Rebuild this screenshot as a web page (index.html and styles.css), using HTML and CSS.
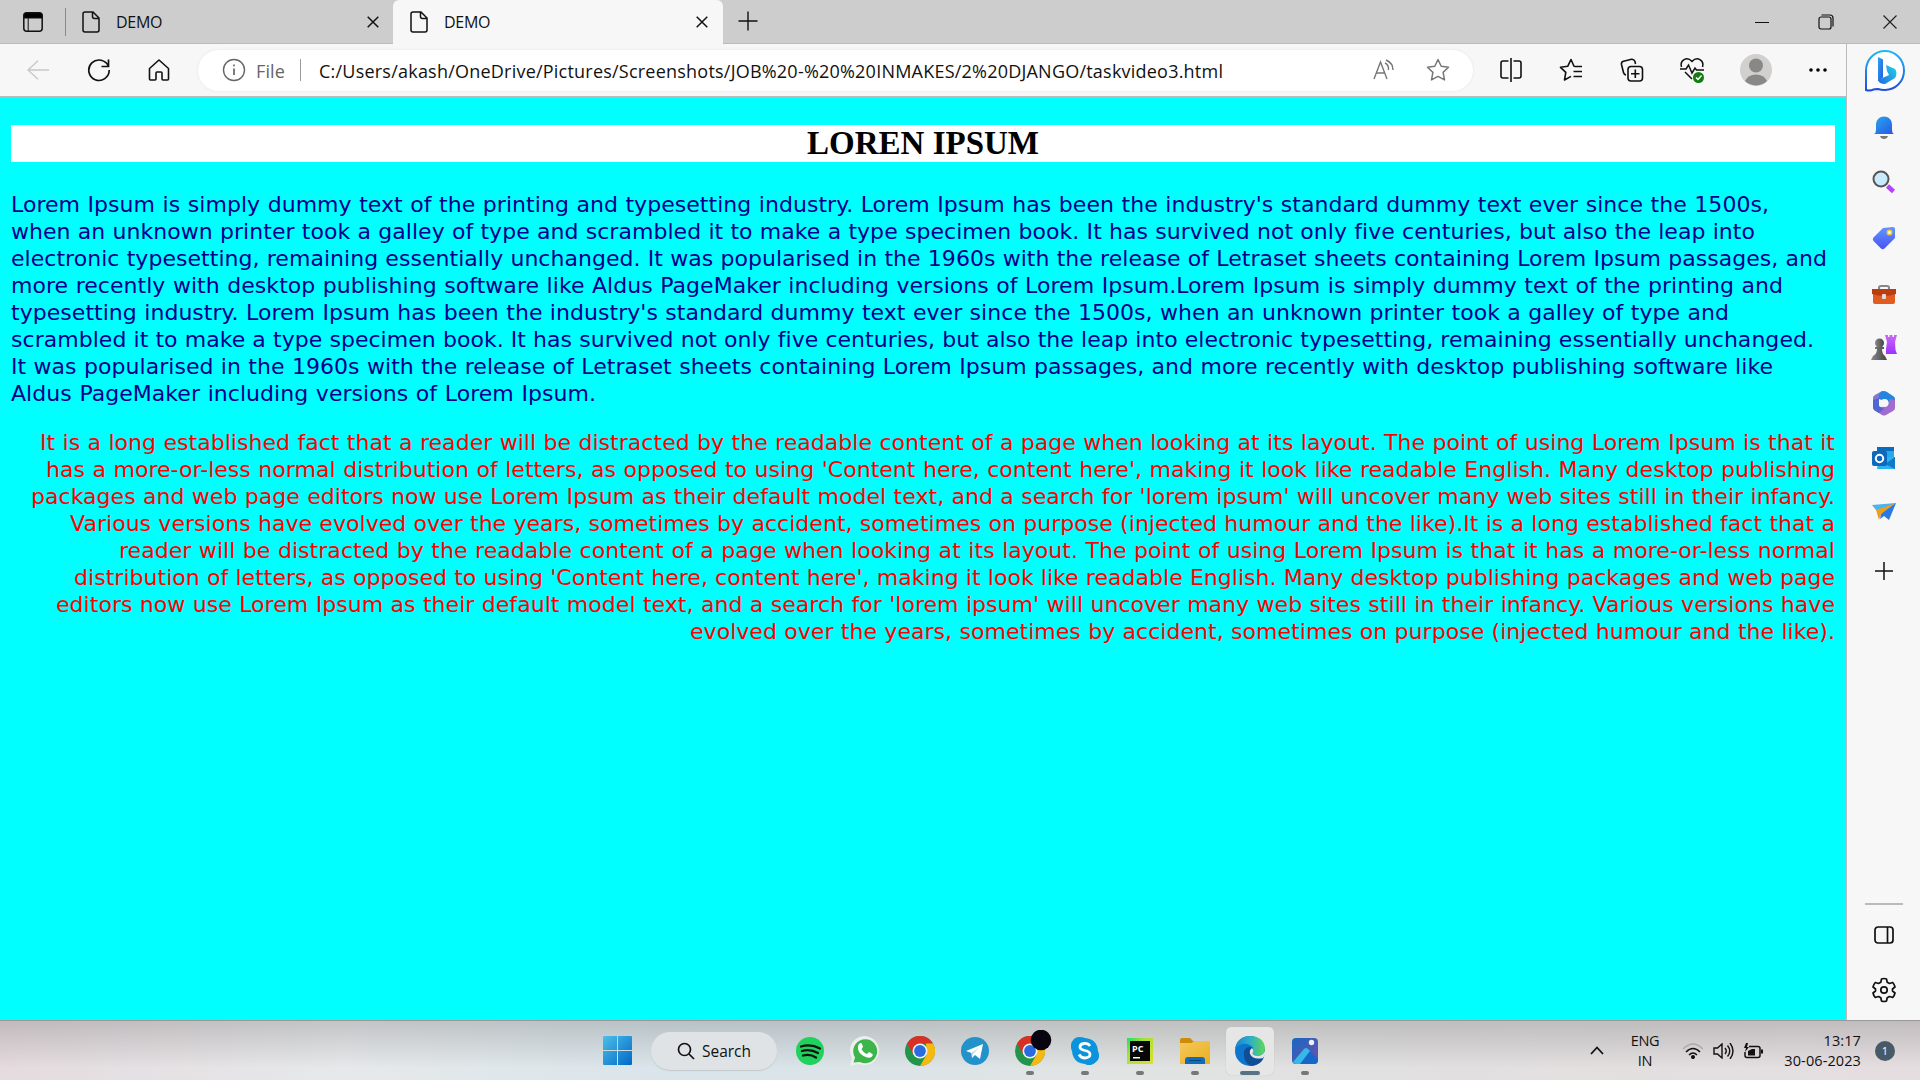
FILE: index.html
```html
<!DOCTYPE html>
<html lang="en">
<head>
<meta charset="utf-8">
<title>DEMO</title>
<link rel="stylesheet" href="styles.css">
</head>
<body>
<svg class="defs" width="0" height="0">
  <defs>
    <linearGradient id="blue" x1="0" y1="0" x2="1" y2="1"><stop offset="0" stop-color="#2aa8ea"/><stop offset="1" stop-color="#2756e8"/></linearGradient>
    <linearGradient id="bingRing" x1="0" y1="0" x2="0" y2="1"><stop offset="0" stop-color="#22b8f5"/><stop offset="1" stop-color="#2050d8"/></linearGradient>
    <linearGradient id="bingTail" x1="1" y1="0" x2="0" y2="1"><stop offset="0" stop-color="#1cd8e8"/><stop offset="1" stop-color="#2468e0"/></linearGradient>
    <linearGradient id="tag" x1="0" y1="0" x2="0" y2="1"><stop offset="0" stop-color="#6096ff"/><stop offset="1" stop-color="#4a52f4"/></linearGradient>
    <linearGradient id="rook" x1="0" y1="0" x2="0" y2="1"><stop offset="0" stop-color="#c86cf4"/><stop offset="1" stop-color="#a030ff"/></linearGradient>
    <linearGradient id="pawn"><stop offset="0" stop-color="#8a8a8a"/><stop offset="1" stop-color="#444"/></linearGradient>
    <linearGradient id="win" x1="0" y1="0" x2="1" y2="1"><stop offset="0" stop-color="#4cc0e8"/><stop offset="1" stop-color="#0067c8"/></linearGradient>
    <linearGradient id="edgeTop"><stop offset="0" stop-color="#1684d0"/><stop offset=".5" stop-color="#2cb0c8"/><stop offset="1" stop-color="#62d850"/></linearGradient>
    <linearGradient id="folder" x1="0" y1="0" x2="1" y2="1"><stop offset="0" stop-color="#f4c85c"/><stop offset="1" stop-color="#eab020"/></linearGradient>
    <linearGradient id="photo" x1="0" y1="0" x2="1" y2="1"><stop offset="0" stop-color="#1468c4"/><stop offset="1" stop-color="#7450a8"/></linearGradient>
    <linearGradient id="pc" x1="0" y1="0" x2="1" y2="1"><stop offset="0" stop-color="#18e068"/><stop offset=".35" stop-color="#a8e038"/><stop offset="1" stop-color="#dce030"/></linearGradient>
    <symbol id="page" viewBox="0 0 18 22"><path d="M3 1h8l6 6v12a2 2 0 0 1-2 2H3a2 2 0 0 1-2-2V3a2 2 0 0 1 2-2zM10.500 1v4.500a2 2 0 0 0 2 2H17" fill="none" stroke="#111" stroke-width="1.500"/></symbol>
    <symbol id="x" viewBox="0 0 12 12"><path d="M.7.7l10.600 10.600M11.300.7L.7 11.300" stroke="#111" stroke-width="1.500"/></symbol>
    <symbol id="chrome" viewBox="0 0 30 30">
      <circle cx="15" cy="15" r="15" fill="#21964a"/>
      <path d="M2 7.500A15 15 0 0 1 28 7.500H15L8.500 18.700z" fill="#d93025"/>
      <path d="M28 7.500A15 15 0 0 1 15 30l6.500-11.300L21 7.500z" fill="#f5b912"/>
      <circle cx="15" cy="15" r="7.500" fill="#f4f4f4"/><circle cx="15" cy="15" r="5.900" fill="#2a6be0"/>
    </symbol>
  </defs>
</svg>
<header class="tabs">
  <div class="workspace"><svg width="20" height="20" viewBox="0 0 20 20"><rect x=".8" y=".8" width="18.400" height="18.400" rx="3" fill="none" stroke="#111" stroke-width="1.500"/><path d="M1 6V3a2 2 0 0 1 2-2h14a2 2 0 0 1 2 2v3zM5.200 6v13" stroke="#111"/></svg></div>
  <div class="tab"><svg width="18" height="22"><use href="#page"/></svg><span>DEMO</span><svg class="close" width="12" height="12"><use href="#x"/></svg></div>
  <div class="tab active"><svg width="18" height="22"><use href="#page"/></svg><span>DEMO</span><svg class="close" width="12" height="12"><use href="#x"/></svg></div>
  <svg class="plus" width="20" height="20" viewBox="0 0 20 20"><path d="M10 .5v19M.5 10h19" stroke="#111" stroke-width="1.400"/></svg>
  <div class="controls">
    <svg width="14" height="14"><path d="M0 7.500h14" stroke="#111"/></svg>
    <svg width="16" height="16" fill="none" stroke="#111" stroke-width="1.200"><rect x="1" y="3" width="12" height="12" rx="2"/><path d="M3.500 1h8.500a3 3 0 0 1 3 3v8.500"/></svg>
    <svg width="14" height="14"><path d="M.5.5l13 13M13.500.5l-13 13" stroke="#222" stroke-width="1.200"/></svg>
  </div>
</header>
<div class="browser">
  <main class="left">
    <nav class="toolbar">
      <svg class="back" width="22" height="20" fill="none" stroke="#c8c8c8" stroke-width="1.400"><path d="M11 .8L1 10l10 9.200M1 10h21"/></svg>
      <svg class="reload" width="24" height="24" fill="none" stroke="#111" stroke-width="1.700"><path d="M21.500 8.500A10.200 10.200 0 1 0 22.200 12M21.500 1.500v7h-7"/></svg>
      <svg class="home" width="22" height="22" fill="none" stroke="#111" stroke-width="1.600" stroke-linejoin="round"><path d="M1.500 9.500L11 1l9.500 8.500V20a1 1 0 0 1-1 1H15a1 1 0 0 1-1-1v-6a1 1 0 0 0-1-1H9a1 1 0 0 0-1 1v6a1 1 0 0 1-1 1H2.500a1 1 0 0 1-1-1z"/></svg>
      <div class="address">
        <svg class="info" width="24" height="24" fill="none" stroke="#666" stroke-width="1.400"><circle cx="12" cy="12" r="10.500"/><path d="M12 10.500V17M12 6.500v1.800" stroke-width="1.700"/></svg>
        <span class="scheme">File</span><i></i><span class="url">C:/Users/akash/OneDrive/Pictures/Screenshots/JOB%20-%20%20INMAKES/2%20DJANGO/taskvideo3.html</span>
        <svg class="read" width="22" height="22" fill="none" stroke="#777" stroke-width="1.400"><path d="M1 20L7.500 3 14 20M3.500 14h8M12 4q4 2 3.500 7M13 1q7 3 7 10"/></svg>
        <svg class="star" width="24" height="24" viewBox="0 0 24 24" fill="none" stroke="#777" stroke-width="1.500" stroke-linejoin="round"><path d="M12 1.500l3.200 6.800 7.300 1-5.400 5.100 1.400 7.500-6.500-3.600-6.500 3.600 1.400-7.500-5.400-5.100 7.300-1z"/></svg>
      </div>
      <div class="tools">
        <svg width="24" height="24" fill="none" stroke="#111" stroke-width="1.600"><path d="M9.500 3H4a2 2 0 0 0-2 2v13a2 2 0 0 0 2 2h5.500M14.500 3H20a2 2 0 0 1 2 2v13a2 2 0 0 1-2 2h-5.500M12 0v24"/></svg>
        <svg width="24" height="24" fill="none" stroke="#111" stroke-width="1.600" stroke-linejoin="round"><path d="M16 8.500l-1-.2L12 1.500 8.700 8.300l-7.200 1 5.300 5.100L5.500 22l6.500-3.600M16 8.500h7M14.500 13.500H23M14.500 18.500H23"/></svg>
        <svg width="24" height="24" fill="none" stroke="#111" stroke-width="1.600"><path d="M6 17q-2-.5-2.500-2.500l-2-8Q1 4 3.500 3.300l8-2Q14 1 15 3.500l.5 2.500"/><rect x="8" y="8.500" width="14.500" height="14.500" rx="3"/><path d="M15.300 11.500v8.500M11 15.800h8.500"/></svg>
        <svg width="24" height="26" fill="none" stroke="#111" stroke-width="1.500"><path d="M1.500 10C-.5 3 7-1 12 4.500 17-1 24.500 3 22.500 10M0 12h6l2.500-4 3.500 8 3-5 1.500 2H24M5 15l7 7"/><circle cx="18.500" cy="20.500" r="5.500" fill="#107c10" stroke="none"/><path d="M16 20.500l2 2 3.500-4" stroke="#fff"/></svg>
        <svg width="32" height="32" viewBox="0 2 32 32"><circle cx="16" cy="18" r="16" fill="#d2d0ce"/><circle cx="16" cy="13.500" r="7" fill="#8a8886"/><path d="M5 29q3-6.500 11-6.500T27 29a16 16 0 0 1-22 0" fill="#8a8886"/></svg>
        <svg width="20" height="6"><circle cx="3" cy="3" r="1.800"/><circle cx="10" cy="3" r="1.800"/><circle cx="17" cy="3" r="1.800"/></svg>
      </div>
    </nav>
    <article class="document">
      <h1>LOREN IPSUM</h1>
      <p class="navy"><span>Lorem Ipsum is simply dummy text of the printing and typesetting industry. Lorem Ipsum has been the industry's standard dummy text ever since the 1500s,</span><span>when an unknown printer took a galley of type and scrambled it to make a type specimen book. It has survived not only five centuries, but also the leap into</span><span>electronic typesetting, remaining essentially unchanged. It was popularised in the 1960s with the release of Letraset sheets containing Lorem Ipsum passages, and</span><span>more recently with desktop publishing software like Aldus PageMaker including versions of Lorem Ipsum.Lorem Ipsum is simply dummy text of the printing and</span><span>typesetting industry. Lorem Ipsum has been the industry's standard dummy text ever since the 1500s, when an unknown printer took a galley of type and</span><span>scrambled it to make a type specimen book. It has survived not only five centuries, but also the leap into electronic typesetting, remaining essentially unchanged.</span><span>It was popularised in the 1960s with the release of Letraset sheets containing Lorem Ipsum passages, and more recently with desktop publishing software like</span><span>Aldus PageMaker including versions of Lorem Ipsum.</span></p>
      <p class="red"><span>It is a long established fact that a reader will be distracted by the readable content of a page when looking at its layout. The point of using Lorem Ipsum is that it</span><span>has a more-or-less normal distribution of letters, as opposed to using 'Content here, content here', making it look like readable English. Many desktop publishing</span><span>packages and web page editors now use Lorem Ipsum as their default model text, and a search for 'lorem ipsum' will uncover many web sites still in their infancy.</span><span>Various versions have evolved over the years, sometimes by accident, sometimes on purpose (injected humour and the like).It is a long established fact that a</span><span>reader will be distracted by the readable content of a page when looking at its layout. The point of using Lorem Ipsum is that it has a more-or-less normal</span><span>distribution of letters, as opposed to using 'Content here, content here', making it look like readable English. Many desktop publishing packages and web page</span><span>editors now use Lorem Ipsum as their default model text, and a search for 'lorem ipsum' will uncover many web sites still in their infancy. Various versions have</span><span>evolved over the years, sometimes by accident, sometimes on purpose (injected humour and the like).</span></p>
    </article>
  </main>
  <aside class="sidebar">
    <svg class="bing" width="42" height="48" viewBox="0 0 42 48"><path d="M21 2C31 2 40 10 40 21.500S31 41 21 41q-4 0-7-1-4 0-6 1-3 1-6 0L2 21.500C2 10 11 2 21 2z" fill="#fff" stroke="url(#bingRing)" stroke-width="2"/><path d="M14 8l5 2.500v18L14 32z" fill="url(#blue)"/><path d="M22 16l9 4q3 4 0 9l-10 6q-6 0-7-4l11-5-2-4z" fill="url(#bingTail)"/></svg>
    <svg width="24" height="24" viewBox="0 0 24 24"><path d="M2 18h20q-2-1-2-4V8Q19 .5 12 .5T4 8v6q0 3-2 4z" fill="url(#blue)"/><path d="M8 20h8q-1 3-4 3t-4-3z" fill="#777"/></svg>
    <svg class="find" width="24" height="24" viewBox="0 0 24 24"><path d="M15.500 16l6 5.500" stroke="#b840ff" stroke-width="4.500"/><circle cx="9" cy="9" r="7.500" fill="#c8eafc" stroke="#555" stroke-width="2"/></svg>
    <svg class="shop" width="24" height="24" viewBox="0 0 24 24"><path d="M11 2L21 1q2 0 2 2v9L12.500 22.500q-2 1.500-3.500 0L1.500 15q-1.500-2 0-3.500z" fill="url(#tag)"/><circle cx="17.500" cy="6.500" r="2.200" fill="#fff" stroke="#f4c820" stroke-width="1.600"/></svg>
    <svg class="kit" width="26" height="24" viewBox="0 0 26 24"><path d="M8 8V5.500Q8 4 10 4h6q2 0 2 1.500V8" fill="none" stroke="#888" stroke-width="2"/><path d="M2 11h22v9q0 2-2 2H4q-2 0-2-2z" fill="#e05c20"/><path d="M1 7h24v5q-12 4-24 0z" fill="#bc3c10"/><rect x="11" y="12" width="4" height="5" rx="1" fill="#ddd"/></svg>
    <svg class="games" width="26" height="26" viewBox="0 0 26 26"><path d="M14 0h3v2h1.500V0h3v2H23V0h3l-2 7 .5 8 1.500 4H15v-5l1-7z" fill="url(#rook)"/><circle cx="8.500" cy="8" r="4.500" fill="url(#pawn)"/><path d="M4 12h9v2h-2q0 5 3 7l2 4H0l2-4q4-2 4-7H4z" fill="url(#pawn)"/></svg>
    <svg class="office" width="24" height="26" viewBox="0 0 24 26"><path d="M12 1l-5 3v11l-6 4V8q0-2 2-3l7-4z" fill="#8076d4"/><path d="M9 2q3-2 6 0l6 4q2 1 2 3v6L7 9V4z" fill="#2386dc"/><path d="M23 10v8q0 2-2 3l-7 4q-2 1-4 0l-8-5q3 0 6-2l9-5V9z" fill="#a16ccf"/><path d="M1 10l6-2v8l5 3-5 4-5-3q-1-1-1-3z" fill="#5266d2"/><circle cx="12.500" cy="13" r="4" fill="#f7f7f7"/></svg>
    <svg class="mail" width="24" height="24" viewBox="0 0 24 24"><path d="M5 1h17v11H5z" fill="#28a8ea"/><path d="M5 1h17v4H5z" fill="#0a6cbd"/><path d="M7 11h16v12H5z" fill="#28b4f0"/><path d="M13 18l10-7v12z" fill="#1478c8"/><rect y="5" width="15" height="15" rx="2" fill="#0f68bc"/><circle cx="7.500" cy="12.500" r="3.700" fill="none" stroke="#fff" stroke-width="2"/></svg>
    <svg class="drop" width="24" height="20" viewBox="0 0 24 20"><path d="M0 3l24-2-8 12-12-5z" fill="#48b4f0"/><path d="M4 8L24 1 9 12l-2 6z" fill="#f0a018"/><path d="M9 12L24 1l-7 17-5-4-4 3z" fill="#2878e8"/></svg>
    <svg class="add" width="18" height="18"><path d="M9 0v18M0 9h18" stroke="#111" stroke-width="1.500"/></svg>
    <div class="spacer"></div><hr>
    <svg class="panel" width="20" height="18" fill="none" stroke="#111" stroke-width="1.700"><rect x="1" y="1" width="18" height="16" rx="3"/><path d="M13.500 1v16"/></svg>
    <svg class="gear" width="24" height="26" viewBox="0 0 24 26" fill="none" stroke="#111" stroke-width="1.700" stroke-linejoin="round"><path d="M9.500 2q2.500-1 5 0l.7 3.200 2.300 1.300 3.200-1q1.800 2 2.300 4.500L20.500 12v2l2.500 2q-.5 2.500-2.300 4.500l-3.200-1-2.300 1.300-.7 3.200q-2.500 1-5 0l-.7-3.200-2.300-1.300-3.200 1Q1.500 18.500 1 16l2.500-2v-2L1 10q.5-2.500 2.300-4.500l3.200 1 2.300-1.300z"/><circle cx="12" cy="13" r="3.200"/></svg>
  </aside>
</div>
<footer class="taskbar">
  <div class="apps">
    <div class="app"><svg width="30" height="30" fill="url(#win)"><path d="M0 1a1 1 0 0 1 1-1h13v14H0zM15 0h13a1 1 0 0 1 1 1v13H15zM0 15h14v14H1a1 1 0 0 1-1-1zM15 15h14v13a1 1 0 0 1-1 1H15z"/></svg></div>
    <div class="search"><svg width="18" height="18" fill="none" stroke="#111" stroke-width="1.700"><circle cx="7.500" cy="7.500" r="6"/><path d="M12 12l5 5"/></svg><span>Search</span></div>
    <div class="app"><svg width="28" height="28"><circle cx="14" cy="14" r="14" fill="#1ed25c"/><path d="M5 9.500q10-3 19 2M6 14q8-2.500 16 2M7 18.500q7-2 13 2" fill="none" stroke="#111" stroke-width="2.300" stroke-linecap="round"/></svg></div>
    <div class="app"><svg width="30" height="30"><path d="M0 30l2-8A14.500 14.500 0 1 1 9 28z" fill="#eee"/><path d="M3.500 26.500l1.500-5A12 12 0 1 1 10 26z" fill="#3cb64a"/><path d="M9 8q2-2 3 0l1 3-1.500 2q2 4 5.500 5l2-2 3.500 2q1 1-1 3-3 2-8-1Q7 16 8 10z" fill="#fff"/></svg></div>
    <div class="app"><svg width="30" height="30"><use href="#chrome"/></svg></div>
    <div class="app"><svg width="28" height="28"><circle cx="14" cy="14" r="14" fill="#2391ca"/><path d="M5 14L22 7l-3 15-5-4-3 3-.5-5L5 14z" fill="#fff"/><path d="M10.500 16l8-6-6.500 7-1 4z" fill="#b8d8ea"/></svg></div>
    <div class="app run"><svg class="profile" width="37" height="36" viewBox="0 0 37 36"><use href="#chrome" y="6" width="30" height="30"/><circle cx="26" cy="10" r="10.300" fill="#080510"/></svg></div>
    <div class="app run"><svg width="28" height="28"><path d="M8 0q4 0 6 1 12 1 13 13 3 7-2 11-5 5-11 2Q2 26 1 14-2 7 3 2q2-2 5-2z" fill="#0b94dc"/><path d="M19 9q-2-3-6-2.500-4 .5-4 3.500 0 2.500 5 3.500t5 4-5 3.500q-4 0-6-3.500" fill="none" stroke="#fff" stroke-width="2.800"/></svg></div>
    <div class="app run"><svg width="26" height="26"><path d="M0 0h26v26H0z" fill="url(#pc)"/><path d="M3 3h20v20H3z" fill="#050805"/><path d="M6 19h7v1.500H6z" fill="#fff"/><text class="pc-label" x="5" y="13.500">PC</text></svg></div>
    <div class="app run"><svg width="30" height="26"><path d="M0 2q0-2 2-2h8l3 3h15v6H0z" fill="#cc8c08"/><path d="M0 5h12l2-2h14q2 0 2 2v21H0z" fill="url(#folder)"/><path d="M5 26v-4q0-3 3-3h14q3 0 3 3v4z" fill="#116cc0"/><path d="M9 22.500h12" stroke="#064878"/></svg></div>
    <div class="app run focus"><svg width="30" height="30" viewBox="0 0 30 30"><circle cx="15" cy="15" r="15" fill="#0c76ce"/><path d="M0 13Q2 0 16 0q13 1 14 12 0 8-8 8-6 0-4-4 2-6-6-8Q5 7 0 13z" fill="url(#edgeTop)"/><path d="M9 15q3-6 9-3-4 3-2 7 4 6 13 2-3 8-12 9-9-2-8-15z" fill="#114d94"/><path d="M17 12q-3 2-2 6 3 6 13 4l2-3v-4q-2 5-8 5-6-1-4-4 1-2-1-4z" fill="#e5e5e5"/></svg></div>
    <div class="app run"><svg width="26" height="26"><rect width="26" height="26" rx="4" fill="url(#photo)"/><circle cx="19.500" cy="4.500" r="2.700" fill="#e8f4ff"/><path d="M1 24L12 11q2-2 4 0l10 10v1q0 4-4 4H4q-2 0-3-2z" fill="#1668c8"/><path d="M1 24L12 11q2-2 4 0l2 2L8 26H4q-2 0-3-2z" fill="#38b8e8"/></svg></div>
  </div>
  <div class="tray">
    <svg class="chev" width="14" height="9" fill="none" stroke="#111" stroke-width="1.800"><path d="M1 8l6-6.500L13 8"/></svg>
    <div class="lang">ENG<br>IN</div>
    <svg class="wifi" width="20" height="16" fill="none" stroke="#111" stroke-width="1.500"><path d="M0 6q10-10 20 0" stroke="#aaa"/><path d="M3 9q7-7 14 0M6 12q4-4 8 0"/><circle cx="10" cy="14" r="1.300" fill="#111"/></svg>
    <svg class="vol" width="21" height="16" fill="none" stroke="#111" stroke-width="1.400"><path d="M1 5h3.500L9 1v14l-4.500-4H1zM12 5q2.500 3 0 6M14.500 2.500q4.500 5.500 0 11M17 0q6 8 0 16"/></svg>
    <svg class="bat" width="21" height="16" fill="none" stroke="#111" stroke-width="1.500"><path d="M6 3.500h9q2 0 2 2v7q0 2-2 2H4q-2 0-2-2V9"/><path d="M5 12.500V8l4-2h3v6.500zM18 6.500h2v4h-2zM3 0L1 5h2l-1 4 4-5H4l1-4z" fill="#111" stroke="none"/></svg>
    <div class="clock">13:17<br>30-06-2023</div>
    <div class="badge">1</div>
  </div>
</footer>
</body>
</html>
```
FILE: styles.css
```css
* { box-sizing: border-box; }
body { margin: 0; width: 1920px; height: 1080px; overflow: hidden; display: flex; flex-direction: column; font-family: "Open Sans", "Noto Sans", sans-serif; color: #111; }
svg { display: block; flex: none; }
.defs { position: absolute; }
.tabs { height: 44px; background: #cdcdcd; display: flex; align-items: center; box-shadow: inset 0 -1px #bbb; }
.workspace { width: 66px; height: 28px; padding: 4px 0 0 23px; border-right: 1px solid #888; }
.tab { width: 327px; height: 44px; display: flex; align-items: center; padding: 0 14px 0 16px; font-size: 16px; }
.tab span { margin-left: 16px; letter-spacing: -.3px; }
.close { margin-left: auto; }
.tab.active { width: 330px; background: #f7f7f7; border-radius: 6px 6px 0 0; padding: 0 15px 0 17px; }
.plus { margin: -2px 0 0 15px; }
.controls { display: flex; gap: 49px; align-items: center; margin-left: auto; margin-right: 23px; }
.browser { height: 977px; display: flex; background: #f7f7f7; border-bottom: 1px solid #999; }
.left { width: 1847px; display: flex; flex-direction: column; border-right: 1px solid #bbb; }
.toolbar { height: 54px; display: flex; align-items: center; padding-left: 27px; border-bottom: 2px solid #bababa; }
.reload { margin-left: 38px; }
.home { margin-left: 37px; }
.address { width: 1275px; height: 41px; margin-left: 28px; border-radius: 21px; background: #fff; display: flex; align-items: center; padding-left: 24px; box-shadow: 0 0 3px #e4e4e4; }
.scheme { color: #666; font-size: 18px; margin: 1px 0 0 10px; width: 44px; letter-spacing: .1px; }
.address i { width: 1px; height: 22px; background: #999; }
.url { font-size: 18px; margin: 1px 0 0 18px; white-space: nowrap; width: 1054px; letter-spacing: .22px; }
.star { margin-left: 31px; }
.tools { display: flex; align-items: center; gap: 36.300px; margin-left: 26px; }
.document { flex: 1; background: #0ff; padding: 27px 11px; }
h1 { margin: 0; height: 37px; background: #fff; color: #000; text-align: center; font: bold 33px/37px "Liberation Serif", serif; }
.document p { margin: 29px 0 0; font: 22px/27px Verdana, "DejaVu Sans", sans-serif; letter-spacing: .04px; font-variant-ligatures: none; }
.document p + p { margin-top: 22px; }
.document span { display: block; white-space: nowrap; text-align: justify; text-align-last: justify; }
.navy { color: #00008b; }
.navy :nth-child(1) { width: 1758px; }
.navy :nth-child(2) { width: 1744px; }
.navy :nth-child(3) { width: 1816px; }
.navy :nth-child(4) { width: 1772px; }
.navy :nth-child(5) { width: 1718px; }
.navy :nth-child(6) { width: 1803px; }
.navy :nth-child(7) { width: 1762px; }
.navy :nth-child(8) { width: 585px; }
.red { color: #f00; }
.red span { margin-left: auto; }
.red :nth-child(1) { width: 1795px; }
.red :nth-child(2) { width: 1789px; }
.red :nth-child(3) { width: 1804px; }
.red :nth-child(4) { width: 1765px; }
.red :nth-child(5) { width: 1716px; }
.red :nth-child(6) { width: 1761px; }
.red :nth-child(7) { width: 1779px; }
.red :nth-child(8) { width: 1145px; }
.sidebar { width: 73px; display: flex; flex-direction: column; align-items: center; padding: 5px 0 17px; gap: 31px; }
.bing { margin: 0 0 -12px 2px; }
.find { margin-top: -1px; }
.shop, .kit, .drop { margin-top: 1px; }
.games, .office { margin-top: -2px; }
.mail { margin-top: -1px; }
.add { margin-top: 9px; }
.spacer { flex: 1; }
.sidebar hr { width: 38px; height: 2px; border: 0; margin: 0 0 -10px; background: #bbb; flex: none; }
.panel { margin-bottom: 2px; }
.taskbar { height: 59px; display: flex; justify-content: space-between; background: linear-gradient(#8885, #fff3 80%), linear-gradient(90deg, #ded2d6, #e0e3e5 18%, #cfdee5 36%, #dadddd 58%, #dad8d8 76%, #dfd6da); }
.apps { display: flex; align-items: center; padding-left: 594px; }
.app { width: 48px; height: 48px; margin-right: 7px; display: grid; place-items: center; position: relative; border-radius: 5px; }
.search { width: 126px; height: 38px; margin: 0 9px 0 2px; border-radius: 19px; background: #e0e3e5; display: flex; align-items: center; justify-content: center; gap: 7px; font-size: 15.500px; box-shadow: 0 1px 1px #c3c8cc; }
.profile { margin: -6px 0 0 7px; }
.run::after { content: ""; position: absolute; bottom: 0; left: 20px; width: 8px; height: 4px; border-radius: 2px; background: #777; }
.focus { background: #e6e6e6; box-shadow: 0 0 1px #aaa; }
.focus::after { left: 14px; width: 20px; background: #567284; }
.pc-label { font: bold 9px "Open Sans", sans-serif; fill: #fff; }
.tray { display: flex; align-items: center; padding-right: 25px; font-size: 14.500px; line-height: 20px; }
.lang { width: 34px; margin-left: 24px; text-align: center; letter-spacing: -.3px; }
.wifi { margin-left: 21px; }
.vol { margin-left: 10px; }
.bat { margin-left: 9px; }
.clock { width: 84px; margin-left: 13px; text-align: right; white-space: nowrap; letter-spacing: .1px; }
.badge { width: 20px; height: 20px; border-radius: 50%; background: #465a68; color: #fff; text-align: center; font-size: 11px; margin-left: 14px; }
```
